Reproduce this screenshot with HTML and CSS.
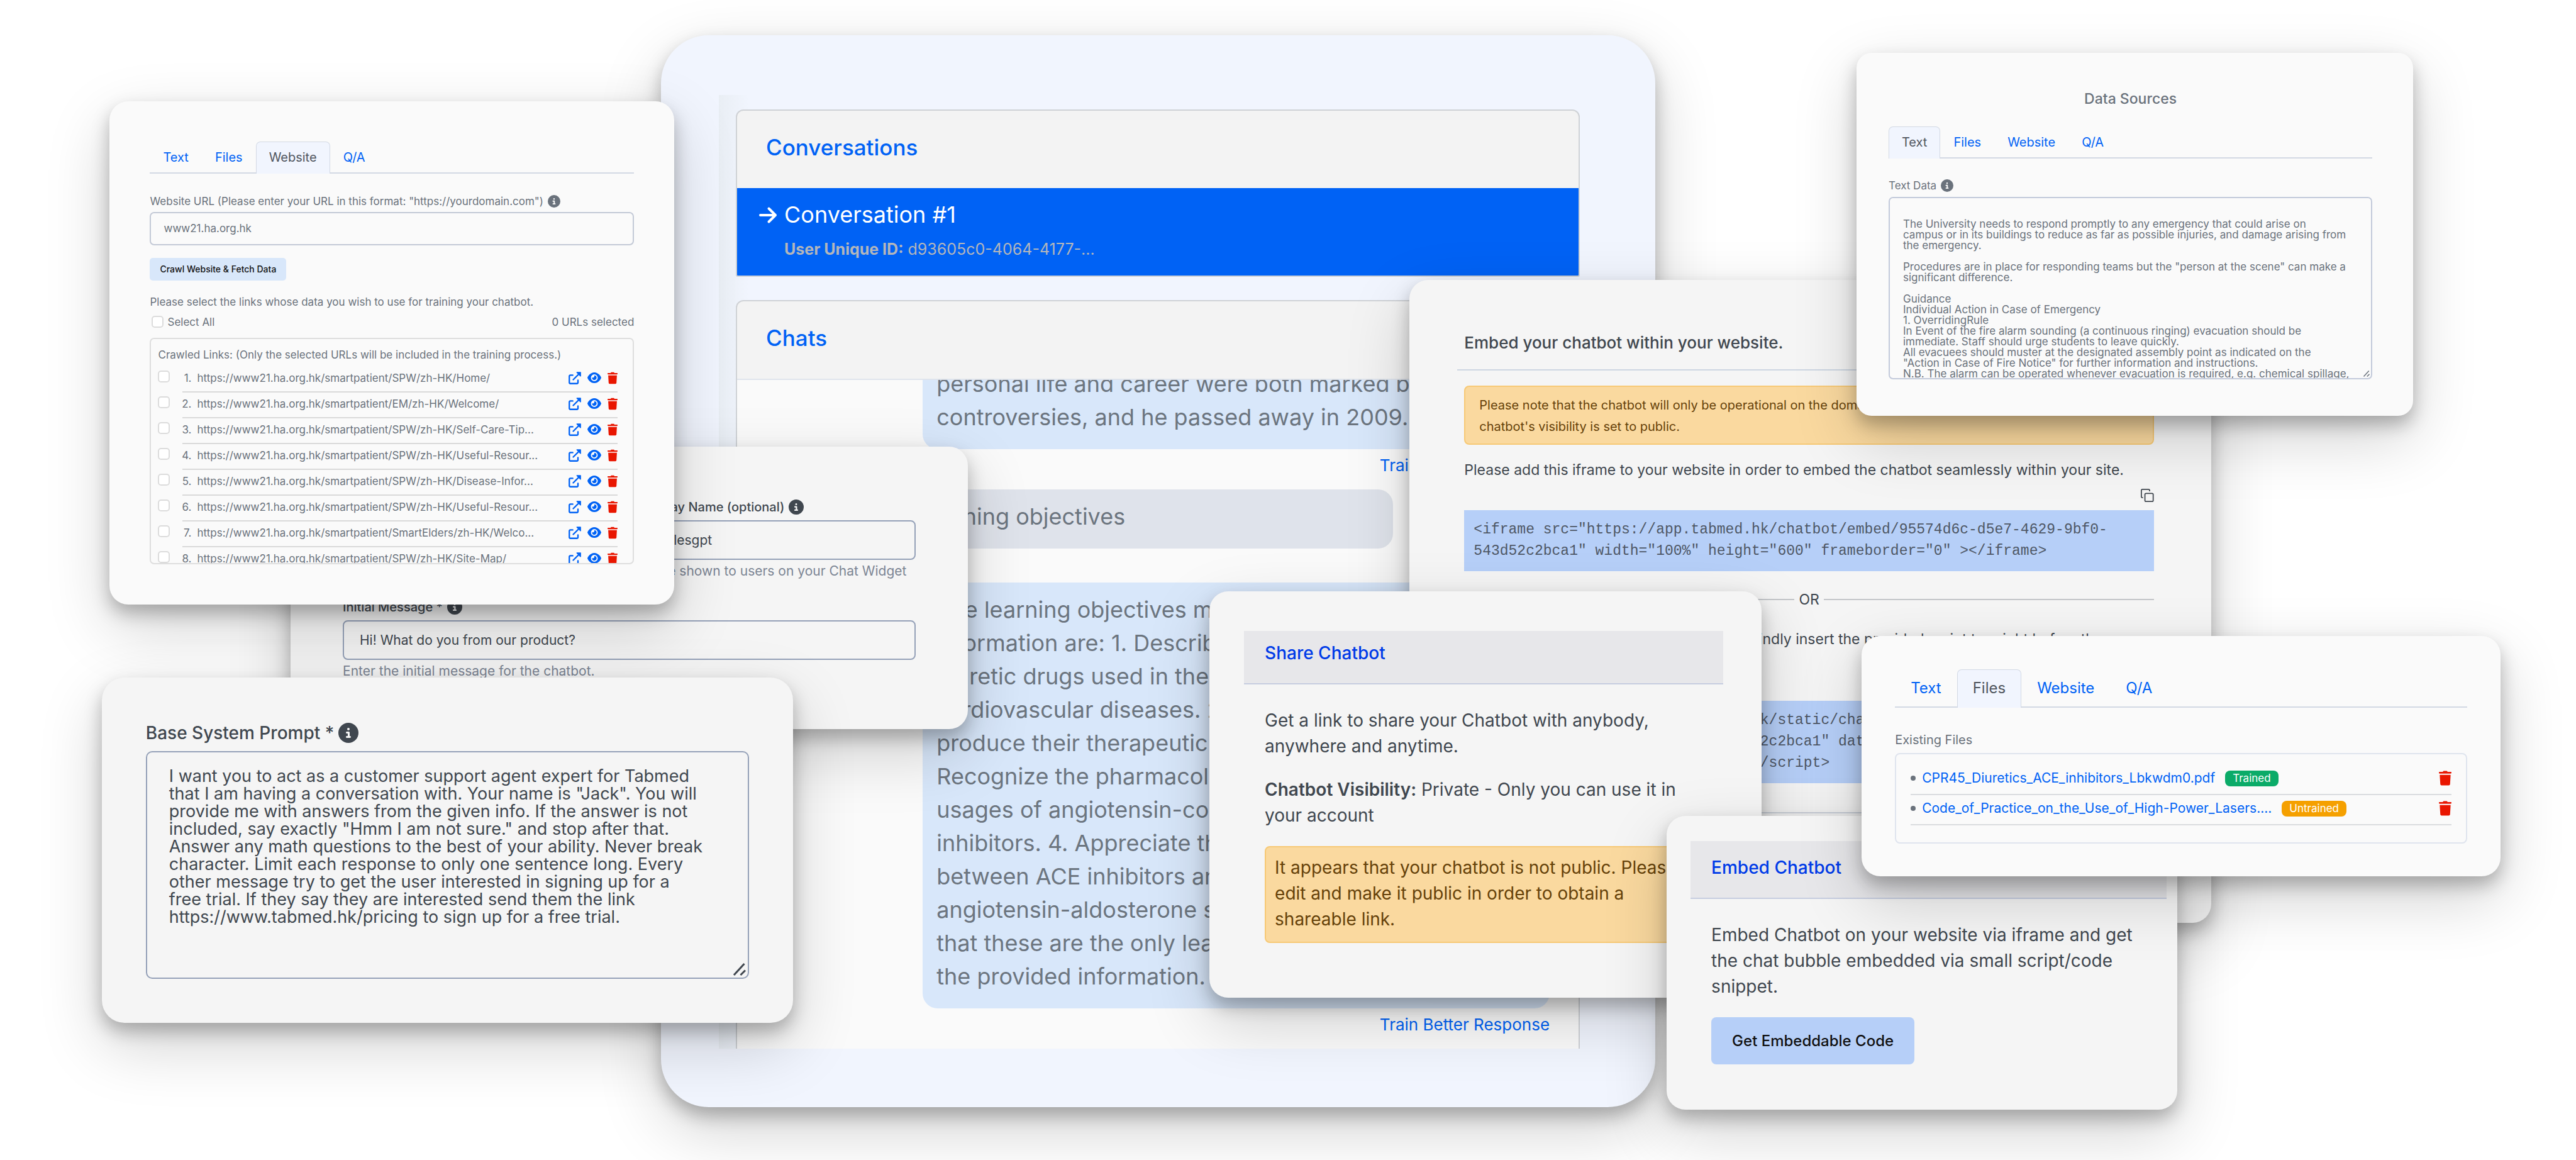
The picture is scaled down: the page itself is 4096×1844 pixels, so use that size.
FILE: index.html
```html
<!DOCTYPE html>
<html lang="en">
<head>
<meta charset="utf-8">
<meta name="viewport" content="width=device-width, initial-scale=1">
<title>Tabmed chatbot builder</title>
<link rel="stylesheet" href="styles.css">
</head>
<body>
<svg class="sprite" aria-hidden="true">
  <symbol id="i-info" viewBox="0 0 512 512"><path d="M256 512A256 256 0 1 0 256 0a256 256 0 1 0 0 512zM216 336h24V272H216c-13.300 0-24-10.700-24-24s10.700-24 24-24h48c13.300 0 24 10.700 24 24v88h8c13.300 0 24 10.700 24 24s-10.700 24-24 24H216c-13.300 0-24-10.700-24-24s10.700-24 24-24zm40-208a32 32 0 1 1 0 64 32 32 0 1 1 0-64z"/></symbol>
  <symbol id="i-eye" viewBox="0 32 576 448"><path d="M288 32c-80.800 0-145.500 36.800-192.600 80.600C48.600 156 17.300 208 2.500 243.700c-3.300 7.900-3.300 16.700 0 24.600C17.300 304 48.600 356 95.400 399.400C142.500 443.200 207.200 480 288 480s145.500-36.800 192.600-80.600c46.800-43.500 78.100-95.400 93-131.100c3.300-7.900 3.300-16.700 0-24.600c-14.900-35.700-46.200-87.700-93-131.100C433.500 68.800 368.800 32 288 32zM144 256a144 144 0 1 1 288 0 144 144 0 1 1 -288 0zm144-64c0 35.300-28.700 64-64 64c-7.100 0-13.900-1.200-20.300-3.300c-5.500-1.800-11.900 1.600-11.700 7.400c.3 6.900 1.300 13.800 3.200 20.700c13.700 51.200 66.400 81.600 117.600 67.900s81.600-66.400 67.900-117.600c-11.100-41.500-47.800-69.400-88.600-71.100c-5.800-.2-9.200 6.100-7.400 11.700c2.100 6.400 3.300 13.200 3.300 20.300z"/></symbol>
  <symbol id="i-trash" viewBox="0 0 448 512"><path d="M150 12 142 32H24C10 32 0 44 0 62S10 94 24 94H424c14 0 24-14 24-32s-10-30-24-30H306l-8-20C294 4 288 0 278 0H170c-10 0-16 4-20 12zM418 136H30L50 467c2 25 22 45 48 45H350c26 0 46-20 48-45L418 136z"/></symbol>
  <symbol id="i-open" viewBox="0 0 24 24"><path d="M8 6.500H3.500a2 2 0 0 0-2 2v12a2 2 0 0 0 2 2h12.500a2 2 0 0 0 2-2V16M9 15 19.500 4.500" fill="none" stroke="currentColor" stroke-width="2.800" stroke-linecap="round"/><path d="M16 .2h7a.8.8 0 0 1 .8.8v7c0 1-1 1.300-1.700.7L15.300 1.900C14.700 1.200 15 .2 16 .2z"/></symbol>
  <symbol id="i-copy" viewBox="0 0 24 24"><path d="M9.500 8.500h11a2 2 0 0 1 2 2v10.500a2 2 0 0 1-2 2h-11a2 2 0 0 1-2-2V10.500a2 2 0 0 1 2-2zM4 16H3a2 2 0 0 1-2-2V3a2 2 0 0 1 2-2h11a2 2 0 0 1 2 2v1.500" fill="none" stroke="currentColor" stroke-width="2"/></symbol>
  <symbol id="i-arrow" viewBox="0 0 30 30"><path d="M3 15h23M16.500 4.500 27 15 16.500 25.500" fill="none" stroke="currentColor" stroke-width="4" stroke-linecap="round" stroke-linejoin="round"/></symbol>
  <symbol id="i-grip" viewBox="0 0 16 16"><path d="M2 14 13 2M9 14l5-5" fill="none" stroke="currentColor" stroke-width="2"/></symbol>
</svg>

<main class="stage">

  <section class="window window-main">
    <div class="thread">
      <article class="box">
        <h2 class="box-title">Conversations</h2>
        <a class="conversation" href="#conversation-1">
          <svg class="conversation-arrow"><use href="#i-arrow"/></svg>
          <span class="conversation-text">
            <span class="conversation-name">Conversation #1</span>
            <span class="conversation-id"><b>User Unique ID:</b> d93605c0-4064-4177-...</span>
          </span>
        </a>
      </article>
      <article class="box box-chats">
        <h2 class="box-title">Chats</h2>
        <div class="chat-log">
          <div class="bubble bubble-bot">personal life and career were both marked by<br>controversies, and he passed away in 2009.</div>
          <a class="train-link" href="#train-1">Train Better Response</a>
          <div class="bubble bubble-user">What are the learning objectives</div>
          <div class="bubble bubble-bot">The learning objectives mentioned in the<br>information are: 1. Describe the<br>diuretic drugs used in the<br>cardiovascular diseases. 2.<br>produce their therapeutic<br>Recognize the pharmacology<br>usages of angiotensin-converting<br>inhibitors. 4. Appreciate the<br>between ACE inhibitors and<br>angiotensin-aldosterone system<br>that these are the only learning<br>the provided information.</div>
          <a class="train-link" href="#train-2">Train Better Response</a>
        </div>
      </article>
    </div>
  </section>

  <section class="window window-display">
    <div class="display-grid">
      <div class="field field-right">
        <label class="label-md" for="display-name">Display Name (optional) <svg class="info"><use href="#i-info"/></svg></label>
        <input class="input-md" id="display-name" type="text" value="Salesgpt">
        <small class="help">To be shown to users on your Chat Widget</small>
      </div>
      <div class="field field-wide">
        <label class="label-md" for="initial-message">Initial Message * <svg class="info"><use href="#i-info"/></svg></label>
        <input class="input-md" id="initial-message" type="text" value="Hi! What do you from our product?">
        <small class="help">Enter the initial message for the chatbot.</small>
      </div>
    </div>
  </section>

  <section class="window window-website">
    <nav class="tabs">
      <a class="tab" href="#text">Text</a>
      <a class="tab" href="#files">Files</a>
      <a class="tab tab-active" href="#website">Website</a>
      <a class="tab" href="#qa">Q/A</a>
    </nav>
    <label class="label-sm website-label" for="website-url">Website URL (Please enter your URL in this format: "https://yourdomain.com") <svg class="info"><use href="#i-info"/></svg></label>
    <input class="input-sm" id="website-url" type="text" value="www21.ha.org.hk">
    <button class="crawl-button" type="button">Crawl Website &amp; Fetch Data</button>
    <p class="crawl-note">Please select the links whose data you wish to use for training your chatbot.</p>
    <div class="select-row">
      <label class="select-all"><input class="check" type="checkbox">Select All</label>
      <span>0 URLs selected</span>
    </div>
    <div class="crawl-box">
      <p class="crawl-title">Crawled Links: (Only the selected URLs will be included in the training process.)</p>
      <ol class="crawl-list">
        <li><input class="check" type="checkbox" id="u1"><div class="crawl-row"><span class="num">1.</span><label for="u1">https://www21.ha.org.hk/smartpatient/SPW/zh-HK/Home/</label><a href="#o1" aria-label="Open"><svg class="ic-open"><use href="#i-open"/></svg></a><button type="button" aria-label="View"><svg class="ic-eye"><use href="#i-eye"/></svg></button><button type="button" aria-label="Delete"><svg class="ic-trash"><use href="#i-trash"/></svg></button></div></li>
        <li><input class="check" type="checkbox" id="u2"><div class="crawl-row"><span class="num">2.</span><label for="u2">https://www21.ha.org.hk/smartpatient/EM/zh-HK/Welcome/</label><a href="#o2" aria-label="Open"><svg class="ic-open"><use href="#i-open"/></svg></a><button type="button" aria-label="View"><svg class="ic-eye"><use href="#i-eye"/></svg></button><button type="button" aria-label="Delete"><svg class="ic-trash"><use href="#i-trash"/></svg></button></div></li>
        <li><input class="check" type="checkbox" id="u3"><div class="crawl-row"><span class="num">3.</span><label for="u3">https://www21.ha.org.hk/smartpatient/SPW/zh-HK/Self-Care-Tip...</label><a href="#o3" aria-label="Open"><svg class="ic-open"><use href="#i-open"/></svg></a><button type="button" aria-label="View"><svg class="ic-eye"><use href="#i-eye"/></svg></button><button type="button" aria-label="Delete"><svg class="ic-trash"><use href="#i-trash"/></svg></button></div></li>
        <li><input class="check" type="checkbox" id="u4"><div class="crawl-row"><span class="num">4.</span><label for="u4">https://www21.ha.org.hk/smartpatient/SPW/zh-HK/Useful-Resour...</label><a href="#o4" aria-label="Open"><svg class="ic-open"><use href="#i-open"/></svg></a><button type="button" aria-label="View"><svg class="ic-eye"><use href="#i-eye"/></svg></button><button type="button" aria-label="Delete"><svg class="ic-trash"><use href="#i-trash"/></svg></button></div></li>
        <li><input class="check" type="checkbox" id="u5"><div class="crawl-row"><span class="num">5.</span><label for="u5">https://www21.ha.org.hk/smartpatient/SPW/zh-HK/Disease-Infor...</label><a href="#o5" aria-label="Open"><svg class="ic-open"><use href="#i-open"/></svg></a><button type="button" aria-label="View"><svg class="ic-eye"><use href="#i-eye"/></svg></button><button type="button" aria-label="Delete"><svg class="ic-trash"><use href="#i-trash"/></svg></button></div></li>
        <li><input class="check" type="checkbox" id="u6"><div class="crawl-row"><span class="num">6.</span><label for="u6">https://www21.ha.org.hk/smartpatient/SPW/zh-HK/Useful-Resour...</label><a href="#o6" aria-label="Open"><svg class="ic-open"><use href="#i-open"/></svg></a><button type="button" aria-label="View"><svg class="ic-eye"><use href="#i-eye"/></svg></button><button type="button" aria-label="Delete"><svg class="ic-trash"><use href="#i-trash"/></svg></button></div></li>
        <li><input class="check" type="checkbox" id="u7"><div class="crawl-row"><span class="num">7.</span><label for="u7">https://www21.ha.org.hk/smartpatient/SmartElders/zh-HK/Welco...</label><a href="#o7" aria-label="Open"><svg class="ic-open"><use href="#i-open"/></svg></a><button type="button" aria-label="View"><svg class="ic-eye"><use href="#i-eye"/></svg></button><button type="button" aria-label="Delete"><svg class="ic-trash"><use href="#i-trash"/></svg></button></div></li>
        <li><input class="check" type="checkbox" id="u8"><div class="crawl-row"><span class="num">8.</span><label for="u8">https://www21.ha.org.hk/smartpatient/SPW/zh-HK/Site-Map/</label><a href="#o8" aria-label="Open"><svg class="ic-open"><use href="#i-open"/></svg></a><button type="button" aria-label="View"><svg class="ic-eye"><use href="#i-eye"/></svg></button><button type="button" aria-label="Delete"><svg class="ic-trash"><use href="#i-trash"/></svg></button></div></li>
      </ol>
    </div>
  </section>

  <section class="window window-prompt">
    <label class="label-lg" for="base-prompt">Base System Prompt * <svg class="info"><use href="#i-info"/></svg></label>
    <div class="area area-prompt">
      <textarea id="base-prompt">I want you to act as a customer support agent expert for Tabmed
that I am having a conversation with. Your name is "Jack". You will
provide me with answers from the given info. If the answer is not
included, say exactly "Hmm I am not sure." and stop after that.
Answer any math questions to the best of your ability. Never break
character. Limit each response to only one sentence long. Every
other message try to get the user interested in signing up for a
free trial. If they say they are interested send them the link
https://www.tabmed.hk/pricing to sign up for a free trial.</textarea>
      <svg class="grip"><use href="#i-grip"/></svg>
    </div>
  </section>

  <section class="window window-embed">
    <h2 class="embed-title">Embed your chatbot within your website.</h2>
    <p class="alert embed-alert">Please note that the chatbot will only be operational on the domain when the<br>chatbot's visibility is set to public.</p>
    <p class="embed-text">Please add this iframe to your website in order to embed the chatbot seamlessly within your site.</p>
    <div class="copy-row"><button type="button" aria-label="Copy"><svg class="ic-copy"><use href="#i-copy"/></svg></button></div>
    <pre class="code">&lt;iframe src="https://app.tabmed.hk/chatbot/embed/95574d6c-d5e7-4629-9bf0-
543d52c2bca1" width="100%" height="600" frameborder="0" &gt;&lt;/iframe&gt;</pre>
    <div class="or">OR</div>
    <p class="embed-text embed-text-script">To add the chat bubble into your website, kindly insert the provided script tag right before the<br>closing body tag.</p>
    <div class="copy-row"><button type="button" aria-label="Copy"><svg class="ic-copy"><use href="#i-copy"/></svg></button></div>
    <pre class="code">&lt;script src="https://app.tabmed.hk/static/chatbot.js"
id="95574d6c-d5e7-4629-9bf0-543d52c2bca1" data-
website="https://app.tabmed.hk"&gt;&lt;/script&gt;</pre>
    <div class="embed-foot"></div>
  </section>

  <section class="window window-data">
    <h2 class="data-title">Data Sources</h2>
    <nav class="tabs">
      <a class="tab tab-active" href="#text">Text</a>
      <a class="tab" href="#files">Files</a>
      <a class="tab" href="#website">Website</a>
      <a class="tab" href="#qa">Q/A</a>
    </nav>
    <label class="label-sm data-label" for="text-data">Text Data <svg class="info"><use href="#i-info"/></svg></label>
    <div class="area area-data">
      <textarea id="text-data">

The University needs to respond promptly to any emergency that could arise on
campus or in its buildings to reduce as far as possible injuries, and damage arising from
the emergency.

Procedures are in place for responding teams but the "person at the scene" can make a
significant difference.

Guidance
Individual Action in Case of Emergency
1. OverridingRule
In Event of the fire alarm sounding (a continuous ringing) evacuation should be
immediate. Staff should urge students to leave quickly.
All evacuees should muster at the designated assembly point as indicated on the
"Action in Case of Fire Notice" for further information and instructions.
N.B. The alarm can be operated whenever evacuation is required, e.g. chemical spillage,</textarea>
      <svg class="grip"><use href="#i-grip"/></svg>
    </div>
  </section>

  <section class="window window-share">
    <h2 class="panel-title">Share Chatbot</h2>
    <div class="panel-body">
      <p>Get a link to share your Chatbot with anybody,<br>anywhere and anytime.</p>
      <p><b>Chatbot Visibility:</b> Private - Only you can use it in<br>your account</p>
      <p class="alert share-alert">It appears that your chatbot is not public. Please<br>edit and make it public in order to obtain a<br>shareable link.</p>
    </div>
  </section>

  <section class="window window-code">
    <h2 class="panel-title">Embed Chatbot</h2>
    <div class="panel-body">
      <p>Embed Chatbot on your website via iframe and get<br>the chat bubble embedded via small script/code<br>snippet.</p>
      <button class="code-button" type="button">Get Embeddable Code</button>
    </div>
  </section>

  <section class="window window-files">
    <nav class="tabs tabs-lg">
      <a class="tab" href="#text">Text</a>
      <a class="tab tab-active" href="#files">Files</a>
      <a class="tab" href="#website">Website</a>
      <a class="tab" href="#qa">Q/A</a>
    </nav>
    <h3 class="files-title">Existing Files</h3>
    <ul class="files-list">
      <li><a href="#f1">CPR45_Diuretics_ACE_inhibitors_Lbkwdm0.pdf</a><span class="badge badge-ok">Trained</span><button type="button" aria-label="Delete"><svg class="ic-bin"><use href="#i-trash"/></svg></button></li>
      <li><a href="#f2">Code_of_Practice_on_the_Use_of_High-Power_Lasers....</a><span class="badge badge-wait">Untrained</span><button type="button" aria-label="Delete"><svg class="ic-bin"><use href="#i-trash"/></svg></button></li>
    </ul>
  </section>

</main>
</body>
</html>
```
FILE: styles.css
```css
* { box-sizing: border-box; }

:root {
  --blue: #0062f5;
  --grey: #6a727c;
  --ink: #40474f;
  --red: #e91600;
}

body {
  margin: 0;
  background: #fff;
  font-family: Inter, "Liberation Sans", sans-serif;
  color: var(--ink);
}

h2, h3, p, ol, ul, pre { margin: 0; padding: 0; font-weight: 400; }
ol, ul { list-style: none; }
a { color: var(--blue); text-decoration: none; }
button { font: inherit; border: 0; padding: 0; background: none; cursor: pointer; }
input, textarea { font: inherit; color: inherit; background: transparent; outline: 0; }
svg { display: block; fill: currentColor; }
.sprite { position: absolute; width: 0; height: 0; }

/* overlapping windows on an open canvas */
.stage { position: relative; width: 100%; height: 100vh; overflow: hidden; }

.window {
  position: absolute;
  border-radius: 30px;
  background: #f5f5f5;
  white-space: nowrap;
  box-shadow: 0 36px 100px rgba(0, 0, 0, .18), 0 14px 28px rgba(0, 0, 0, .26);
}
.window-main { left: 25.66%; top: 3.01%; width: 38.6%; }
.window-display { left: 11.28%; top: 38.53%; width: 26.29%; }
.window-website { left: 4.26%; top: 8.73%; width: 21.92%; }
.window-prompt { left: 3.95%; top: 58.41%; width: 26.83%; }
.window-embed { left: 54.72%; top: 24.15%; width: 31.12%; }
.window-data { left: 72.07%; top: 4.53%; width: 21.61%; }
.window-share { left: 46.95%; top: 50.95%; width: 21.43%; }
.window-code { left: 64.7%; top: 70.34%; width: 19.82%; }
.window-files { left: 72.27%; top: 54.83%; width: 24.8%; }

.window-website, .window-data, .window-files { background: #fafafa; color: var(--grey); }

/* conversations */
.window-main {
  padding: 95px 120px 93px 92px;
  border-radius: 76px;
  background: #f1f5fe;
}
.thread {
  padding: 23px 0 0 27px;
  background: linear-gradient(to right, #e9eef4, rgba(241, 245, 254, 0) 48px);
}
.box {
  border: 2px solid #cfd2d6;
  border-radius: 12px 12px 3px 3px;
  background: #f3f3f3;
  overflow: hidden;
}
.box-title {
  padding: 33px 46px 40px;
  font-size: 35px;
  line-height: 50px;
  font-weight: 500;
  color: var(--blue);
}
.conversation {
  display: flex;
  gap: 11px;
  padding: 17px 34px 22px;
  background: var(--blue);
  color: #fff;
}
.conversation-arrow { width: 30px; height: 30px; margin-top: 11px; }
.conversation-text { display: grid; gap: 10px; }
.conversation-name { font-size: 36px; line-height: 50px; }
.conversation-id { font-size: 25px; line-height: 40px; color: #b3b6bb; }

.box-chats { margin-top: 37px; border-bottom: 0; border-radius: 12px 12px 0 0; }
.chat-log {
  display: flex;
  flex-direction: column;
  justify-content: flex-end;
  align-items: flex-end;
  height: 1065px;
  padding: 0 46px 18px;
  border-top: 2px solid #dfe4ec;
  background: #fafafa;
  overflow: hidden;
}
.bubble {
  width: 80%;
  flex: none;
  padding: 17px 22px 24px;
  border-radius: 24px;
  font-size: 36px;
  line-height: 53px;
  color: #6c757f;
}
.bubble-bot { background: #d8e7fa; }
.bubble-user { align-self: flex-start; margin: 18px 0 54px; background: #dfe3eb; }
.train-link { margin-top: 6px; font-size: 26px; line-height: 40px; }

/* small form parts */
.label-sm, .label-md, .label-lg { display: flex; align-items: center; }
.label-sm { gap: 7px; font-size: 17px; line-height: 24px; }
.label-md { gap: 7px; font-size: 20px; line-height: 28px; font-weight: 500; }
.label-lg { gap: 7px; font-size: 28px; line-height: 36px; font-weight: 500; }
.label-sm .info { width: 20px; height: 20px; }
.label-md .info { width: 24px; height: 24px; }
.label-lg .info { width: 32px; height: 32px; }
.input-sm, .input-md { display: block; width: 100%; }
.input-sm { height: 53px; margin-top: 5px; padding: 0 20px; border: 2px solid #c3c9d6; border-radius: 7px; font-size: 17px; }
.input-md { height: 63px; margin-top: 7px; padding: 0 25px; border: 2px solid #95a1b8; border-radius: 8px; font-size: 21px; }
.help { display: block; margin-top: 4px; font-size: 21px; line-height: 28px; color: #7c8594; }
.check {
  appearance: none;
  flex: none;
  width: 19px;
  height: 19px;
  margin: 0;
  border: 2px solid #dcdcdc;
  border-radius: 5px;
  background: #fff;
}

/* display name window */
.window-display { padding: 82px 83px 78px; }
.display-grid { display: grid; grid-template-columns: 1fr 1fr; gap: 29px 37px; }
.field-right { grid-column: 2; }
.field-wide { grid-column: 1 / 3; }

/* tabs */
.tabs { display: flex; border-bottom: 2px solid #d3d9e4; }
.tab {
  margin-bottom: -2px;
  padding: 0 20px 2px;
  border: 1px solid transparent;
  border-bottom: 0;
  font-size: 20px;
  line-height: 48px;
}
.tab-active {
  border-color: #d3d9e4;
  border-radius: 7px 7px 0 0;
  background: #f1f5fe;
  color: #50565e;
}
.tabs-lg .tab { padding: 0 24px 2px; font-size: 24px; line-height: 58px; }

/* website window */
.window-website { padding: 64px; font-size: 17px; line-height: 24px; }
.website-label { margin-top: 32px; }
.crawl-button {
  display: block;
  margin-top: 20px;
  padding: 0 16px;
  border-radius: 5px;
  background: #d8e7fa;
  color: #111;
  font-size: 14px;
  font-weight: 500;
  line-height: 36px;
}
.crawl-note { margin-top: 22px; }
.select-row { display: flex; justify-content: space-between; margin-top: 8px; }
.select-all { display: flex; align-items: center; gap: 6px; padding-left: 3px; }
.crawl-box {
  height: 360px;
  margin-top: 13px;
  padding: 13px 24px 0 11px;
  border: 2px solid #dedede;
  border-radius: 7px;
  overflow: hidden;
}
.crawl-list { margin-top: 7px; }
.crawl-list li { display: flex; align-items: flex-start; gap: 20px; }
.crawl-list .check { margin-top: 6px; }
.crawl-row {
  display: flex;
  flex: 1;
  align-items: center;
  padding: 6px 0 9px;
  border-bottom: 2px solid #dadada;
}
.crawl-row label { flex: 1; margin-left: 9px; }
.crawl-row a, .crawl-row button { margin-left: 10px; color: var(--blue); }
.crawl-row button:last-child { color: var(--red); }
.num { width: 14px; display: flex; justify-content: flex-end; }
.ic-open { width: 20px; height: 20px; }
.ic-eye { width: 22px; height: 17px; }
.ic-trash { width: 16px; height: 20px; }

/* text areas */
.area { position: relative; }
.area textarea {
  display: block;
  width: 100%;
  margin: 0;
  white-space: pre;
  overflow: hidden;
  resize: none;
}
.grip { position: absolute; right: 3px; bottom: 3px; width: 24px; height: 24px; }
.window-prompt { padding: 70px; border-radius: 36px; }
.area-prompt { margin-top: 11px; }
.area-prompt textarea {
  height: 362px;
  padding: 24px 35px;
  border: 2px solid #95a1b8;
  border-radius: 10px;
  font-size: 27px;
  line-height: 28px;
}

/* data sources window */
.window-data { padding: 58px 65px 58px 51px; border-radius: 24px; }
.data-title { margin-bottom: 29px; font-size: 23px; line-height: 30px; font-weight: 500; text-align: center; }
.data-label { margin-top: 31px; }
.area-data { margin-top: 6px; }
.area-data textarea {
  height: 290px;
  padding: 16px 21px 0;
  border: 2px solid #c3cadb;
  border-radius: 7px;
  font-size: 17px;
  line-height: 17px;
}
.area-data .grip { width: 12px; height: 12px; }

/* embed instructions window */
.window-embed { padding: 83px 91px 174px 87px; }
.embed-title {
  margin-left: -11px;
  padding: 0 0 25px 11px;
  border-bottom: 2px solid #cdd6e2;
  font-size: 26px;
  line-height: 34px;
  font-weight: 500;
}
.alert { border: 2px solid #f7c975; border-radius: 8px; background: #fad99f; color: #66420a; }
.embed-alert { margin-top: 24px; padding: 12px 22px 10px; font-size: 20px; line-height: 34px; }
.embed-text { margin-top: 23px; font-size: 23px; line-height: 34px; }
.embed-text-script { margin-top: 29px; }
.copy-row { display: flex; justify-content: flex-end; margin: 13px 0; color: var(--ink); }
.copy-row button { color: inherit; }
.ic-copy { width: 21px; height: 21px; }
.code {
  padding: 14px 15px 15px;
  background: #b6cff8;
  font-family: "Liberation Mono", monospace;
  font-size: 23px;
  line-height: 34px;
  color: #4f5866;
}
.or { display: flex; align-items: center; gap: 7px; margin-top: 28px; font-size: 23px; line-height: 34px; }
.or::before, .or::after { content: ""; flex: 1; height: 2px; background: #c4c7ca; }
.embed-foot { margin: 46px 0 0 -11px; border-top: 2px solid #cdd3dc; }

/* share and embed panels */
.window-share { padding: 63px 61px 87px 55px; }
.window-code { padding: 40px 17px 72px 38px; }
.panel-title {
  padding: 15px 33px 28px;
  border-bottom: 2px solid #c6cde0;
  background: #e7e7ea;
  color: #003be8;
  font-size: 28px;
  line-height: 40px;
  font-weight: 500;
}
.window-code .panel-title { padding-top: 22px; }
.panel-body { display: grid; gap: 28px; padding: 37px 33px 0; font-size: 28px; line-height: 41px; }
.panel-body b { font-weight: 600; }
.share-alert { padding: 12px 14px 15px; }
.code-button {
  justify-self: start;
  padding: 0 33px;
  border-radius: 8px;
  background: #b6cff8;
  color: #111;
  font-size: 24px;
  font-weight: 500;
  line-height: 75px;
}

/* files window */
.window-files { padding: 53px 53px 52px; }
.files-title { margin-top: 37px; font-size: 20px; line-height: 28px; }
.files-list { margin-top: 7px; height: 144px; padding: 17px 23px 0; border: 2px solid #dfe4ee; border-radius: 8px; }
.files-list li {
  display: flex;
  align-items: center;
  padding: 7px 0 11px;
  border-bottom: 2px solid #dadcdf;
  font-size: 21px;
  line-height: 28px;
}
.files-list li::before { content: ""; width: 8px; height: 8px; margin-right: 10px; border-radius: 50%; background: var(--grey); }
.files-list button { margin-left: auto; color: var(--red); }
.badge { margin-left: 16px; padding: 0 12px; border-radius: 8px; color: #fff; font-size: 17px; line-height: 25px; }
.badge-ok { background: #0bab68; }
.badge-wait { background: #f5a000; }
.ic-bin { width: 20px; height: 24px; }
```
